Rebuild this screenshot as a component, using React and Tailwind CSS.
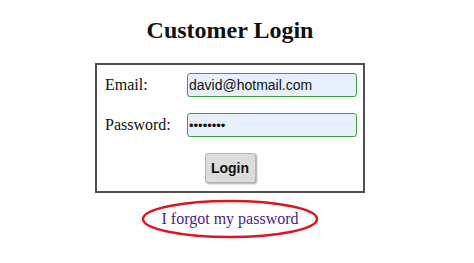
import React from "react";

export default function App() {
  return (
    <div className="w-[474px] h-[263px] bg-white overflow-hidden">
      <div className="w-[460px] flex flex-col items-center">
        <h1 className="mt-[16px] text-[24px] leading-[28px] font-bold text-[#111] font-['Liberation_Serif',serif]">
          Customer Login
        </h1>
        <div className="mt-[19px] w-[270px] h-[130px] border-2 border-[#505050] pt-[8px] pl-[8px] pr-[6px] flex flex-col font-['Liberation_Serif',serif] text-[16px] text-[#111]">
          <div className="flex items-center h-[24px]">
            <span className="w-[82px]">Email:</span>
            <input
              readOnly
              value="david@hotmail.com"
              className="w-[170px] h-[24px] border border-[#3f9f3f] rounded-[3px] bg-[#e8f0fe] pl-[1px] text-[14px] text-[#111] font-['Liberation_Sans',sans-serif] outline-none"
            />
          </div>
          <div className="flex items-center h-[24px] mt-[16px]">
            <span className="w-[82px]">Password:</span>
            <input
              readOnly
              type="password"
              value="password"
              className="w-[170px] h-[24px] border border-[#3f9f3f] rounded-[3px] bg-[#e8f0fe] pl-[1px] text-[13px] text-[#111] font-['Liberation_Sans',sans-serif] outline-none"
            />
          </div>
          <div className="flex justify-center mt-[16px] pr-[2px]">
            <button className="w-[51px] h-[30px] bg-[#dcdcdc] border border-[#b5b5b5] rounded-[3px] shadow-[1px_1px_2px_rgba(0,0,0,0.35)] text-[14px] font-bold text-[#111] font-['Liberation_Sans',sans-serif]">
              Login
            </button>
          </div>
        </div>
        <div className="relative mt-[6px] w-[180px] h-[40px] flex items-center justify-center">
          <svg className="absolute inset-0" width="180" height="40" viewBox="0 0 180 40">
            <ellipse cx="90" cy="20" rx="87" ry="18" fill="none" stroke="#e0141e" strokeWidth="2.5" />
          </svg>
          <a className="relative text-[16px] text-[#4b1a8b] font-['Liberation_Serif',serif]">I forgot my password</a>
        </div>
      </div>
    </div>
  );
}
